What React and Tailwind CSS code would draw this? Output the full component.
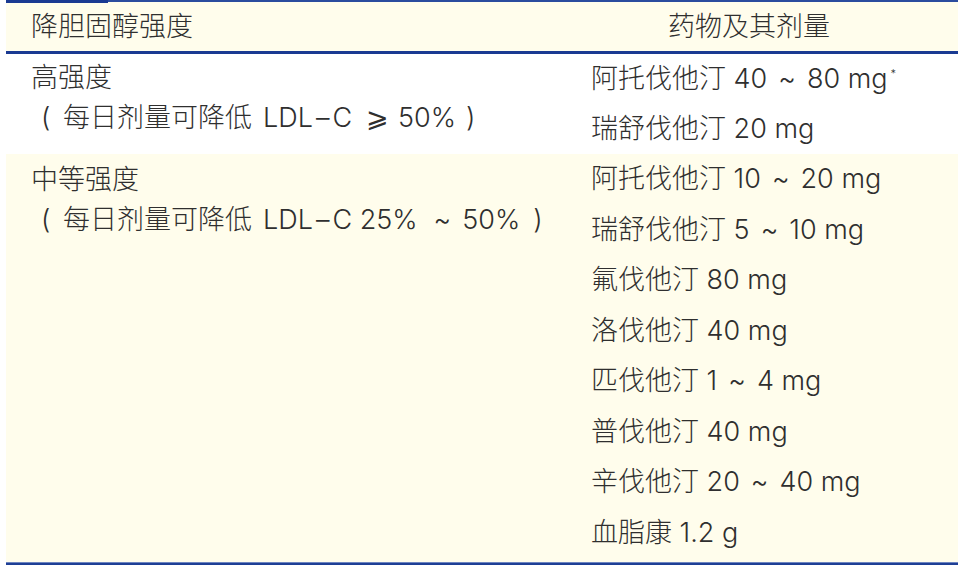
function T({ cls = "mx-[11px]" }) {
  return <span className={"inline-block " + cls}>~</span>;
}

function LDL() {
  return (
    <>
      <span className="inline-block ml-[11px]">LDL</span>
      <span className="inline-block mx-[3px]">–</span>C
    </>
  );
}

export default function App() {
  const font = { fontFamily: "Inter, 'Noto Sans CJK SC', sans-serif" };
  const row1 = [
    <>阿托伐他汀 40<T />80 mg<sup className="text-[11px] relative -top-[5px] ml-[3px]">*</sup></>,
    <>瑞舒伐他汀 20 mg</>,
  ];
  const row2 = [
    <>阿托伐他汀 10<T />20 mg</>,
    <>瑞舒伐他汀 5<T />10 mg</>,
    <>氟伐他汀 80 mg</>,
    <>洛伐他汀 40 mg</>,
    <>匹伐他汀 1<T />4 mg</>,
    <>普伐他汀 40 mg</>,
    <>辛伐他汀 20<T />40 mg</>,
    <>血脂康 1.2 g</>,
  ];
  return (
    <div className="w-[972px] h-[572px] bg-white text-[#2f2f2f] font-light text-[27px]" style={font}>
      <div className="ml-[6px] w-[952px] flex flex-col">
        <div className="relative h-[2px] bg-[#2b4c9e]">
          <div className="absolute left-0 top-0 w-[102px] h-[3px] bg-[#1a3a92]"></div>
        </div>
        <div className="flex h-[49px] bg-[#fffdec] items-center pt-[2px]">
          <div className="w-[534px] pl-[25px]">降胆固醇强度</div>
          <div className="flex-1 text-center">药物及其剂量</div>
        </div>
        <div className="h-[3px] bg-[#1a3a92]"></div>
        <div className="flex bg-white">
          <div className="w-[534px] pl-[25px] pt-[4px] leading-[40px]">
            <div>高强度</div>
            <div className="whitespace-nowrap">
              <span className="inline-block w-[32px] pl-[10px]">(</span>每日剂量可降低<LDL />
              <span className="inline-block ml-[14px]">⩾</span>
              <span className="inline-block ml-[9px]">50%</span>
              <span className="inline-block pl-[10px]">)</span>
            </div>
          </div>
          <div className="flex-1 pl-[51px]">
            {row1.map((t, i) => (
              <div key={i} className="h-[50px] flex items-center">{t}</div>
            ))}
          </div>
        </div>
        <div className="flex bg-[#fffdec] pb-[4px]">
          <div className="w-[534px] pl-[25px] pt-[6px] leading-[40px]">
            <div>中等强度</div>
            <div className="whitespace-nowrap">
              <span className="inline-block w-[32px] pl-[10px]">(</span>每日剂量可降低<LDL /> 25%<T cls="ml-[16px] mr-[11px]" />50%<span className="inline-block pl-[13px]">)</span>
            </div>
          </div>
          <div className="flex-1 pl-[51px]">
            {row2.map((t, i) => (
              <div key={i} className="h-[50.5px] flex items-center">{t}</div>
            ))}
          </div>
        </div>
        <div className="h-[3px] bg-[#1f3f95] border-t border-[#6f86c0]"></div>
      </div>
    </div>
  );
}
